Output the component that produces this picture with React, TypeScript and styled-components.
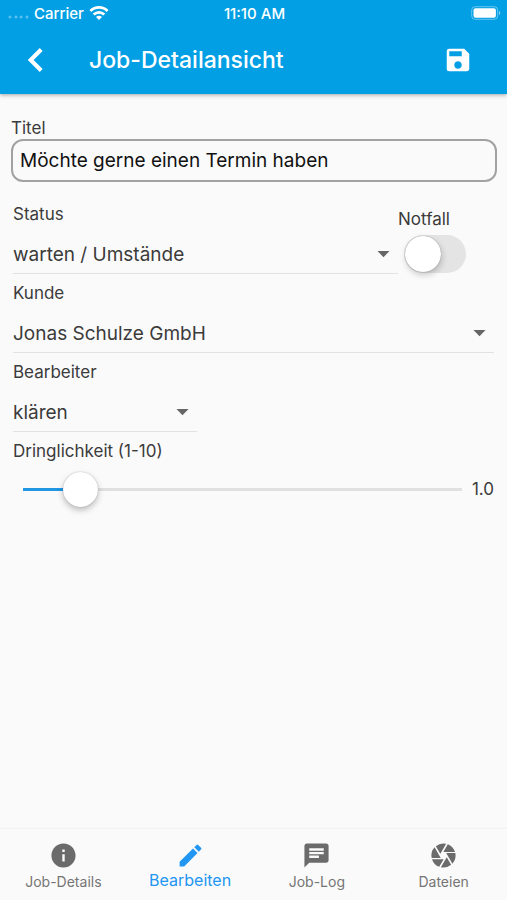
import { useState } from "react";
import type { CSSProperties, ReactNode } from "react";
import styled, { createGlobalStyle } from "styled-components";
import { MdArrowDropDown, MdCamera, MdChat, MdEdit, MdInfo, MdSave } from "react-icons/md";

const GlobalStyle = createGlobalStyle`
  *, *::before, *::after { box-sizing: border-box; }
  body {
    margin: 0;
    background: #fafafa;
    color: #3b3b3b;
    font-family: Inter, "Liberation Sans", sans-serif;
  }
  button, input, select { font: inherit; color: inherit; margin: 0; }
`;

const Screen = styled.div`
  display: flex;
  flex-direction: column;
  min-height: 100vh;
`;

const Header = styled.header`
  background: #029fe4;
  color: #fff;
  box-shadow: 0 1px 4px rgba(0, 0, 0, 0.35);
`;

const StatusBar = styled.div`
  display: grid;
  grid-template-columns: 1fr auto 1fr;
  align-items: center;
  height: 26px;
  padding: 0 6px 0 8px;
  font-size: 15px;
  font-weight: 500;
`;

const Carrier = styled.div`
  display: flex;
  align-items: center;
  gap: 5px;
`;

const BatterySlot = styled.div`
  display: flex;
  justify-content: flex-end;
`;

const AppBar = styled.div`
  display: flex;
  align-items: center;
  height: 68px;
  padding: 0 29px 0 16px;
`;

const Title = styled.h1`
  flex: 1;
  margin: 0 0 0 33px;
  font-size: 23px;
  line-height: 32px;
  font-weight: 500;
`;

const IconButton = styled.button`
  display: grid;
  place-items: center;
  width: 40px;
  height: 40px;
  padding: 0;
  border: 0;
  background: none;
  cursor: pointer;
`;

const Form = styled.form`
  flex: 1;
  padding: 24px 10px 24px 11px;
`;

const TitleField = styled.div`
  display: flex;
  flex-direction: column;
  margin-bottom: 13px;
`;

const TitleInput = styled.input`
  width: 100%;
  height: 43px;
  padding: 0 7px;
  border: 2px solid #a2a2a2;
  border-radius: 12px;
  background: transparent;
  color: #111;
  font-size: 19px;
`;

const Label = styled.label<{ $height: number }>`
  display: block;
  font-size: 17px;
  line-height: ${(p) => p.$height}px;
`;

const Fields = styled.div`
  padding: 0 3px 0 2px;
`;

const StatusRow = styled.div`
  display: grid;
  grid-template-columns: 1fr 96px;
`;

const Field = styled.div<{ $width?: string }>`
  width: ${(p) => p.$width ?? "100%"};
`;

const SelectBox = styled.div`
  display: grid;
  align-items: center;
  border-bottom: 1px solid #e2e2e2;

  > * { grid-area: 1 / 1; }
  svg {
    justify-self: end;
    color: #666;
    pointer-events: none;
  }
`;

const Select = styled.select`
  appearance: none;
  width: 100%;
  height: 40px;
  padding: 2px 30px 0 0;
  border: 0;
  background: transparent;
  font-size: 19px;
`;

const SwitchField = styled.div`
  display: flex;
  flex-direction: column;
  align-items: flex-start;
  padding-top: 14px;
`;

const Switch = styled.input`
  appearance: none;
  display: flex;
  width: 62px;
  height: 38px;
  margin: 6px 0 0 6px;
  padding: 1px;
  border-radius: 19px;
  background: #e4e4e4;
  cursor: pointer;

  &::before {
    content: "";
    width: 36px;
    height: 36px;
    border-radius: 50%;
    background: #fff;
    box-shadow: 0 0 1px rgba(0, 0, 0, 0.45), 1px 3px 6px rgba(0, 0, 0, 0.2);
  }
  &:checked { justify-content: flex-end; background: #2196f3; }
`;

const SliderRow = styled.div`
  display: flex;
  align-items: center;
  gap: 10px;
  padding-left: 10px;
`;

const Slider = styled.input`
  appearance: none;
  flex: 1;
  min-width: 0;
  height: 36px;
  background: linear-gradient(to right, #2196e3 var(--fill), #e0e0e0 var(--fill)) center / 100% 3px no-repeat;
  cursor: pointer;

  &::-webkit-slider-thumb {
    appearance: none;
    width: 35px;
    height: 35px;
    border-radius: 50%;
    background: #fff;
    box-shadow: 0 0 1px rgba(0, 0, 0, 0.35), 0 3px 6px rgba(0, 0, 0, 0.25);
  }
`;

const SliderValue = styled.output`
  font-size: 17px;
`;

const TabBar = styled.nav`
  position: sticky;
  bottom: 0;
  display: grid;
  grid-template-columns: repeat(4, 1fr);
  height: 71px;
  background: #fafafa;
  box-shadow: 0 -1px 1px rgba(0, 0, 0, 0.03);
`;

const Tab = styled.button<{ $active: boolean }>`
  display: flex;
  flex-direction: column;
  align-items: center;
  gap: ${(p) => (p.$active ? 0 : 2)}px;
  padding: 12px 0 0;
  border: 0;
  background: none;
  color: ${(p) => (p.$active ? "#2196f3" : "#757575")};
  font-size: ${(p) => (p.$active ? 16 : 14)}px;
  line-height: 20px;
  cursor: pointer;

  svg { color: ${(p) => (p.$active ? "#2196f3" : "#6b6b6b")}; }
`;

function SignalDots() {
  return (
    <svg width="21" height="16" viewBox="0 0 21 16" fill="#fff" opacity="0.35" aria-hidden="true">
      {[2, 8, 13, 19].map((x) => (
        <circle key={x} cx={x} cy="12" r="1.5" />
      ))}
    </svg>
  );
}

function WifiIcon() {
  return (
    <svg width="20" height="16" viewBox="0 0 20 16" fill="none" stroke="#fff" strokeWidth="2.8" aria-hidden="true">
      <path d="M1.4 6C6.2 1.2 13.8 1.2 18.6 6" />
      <path d="M4.7 9.5c3-2.9 7.6-2.9 10.6 0" />
      <path d="M10 15 7 11.900c1.700-1.600 4.300-1.600 6 0z" fill="#fff" stroke="none" />
    </svg>
  );
}

function BatteryIcon() {
  return (
    <svg width="30" height="14" viewBox="0 0 30 14" aria-hidden="true">
      <rect x="0.7" y="0.7" width="26" height="12.6" rx="3.5" fill="none" stroke="#fff" strokeOpacity="0.4" />
      <rect x="2.5" y="2.3" width="22.4" height="9.4" rx="2" fill="#fff" />
      <path d="M28 5v4c1.8-.7 1.8-3.3 0-4z" fill="#fff" fillOpacity="0.5" />
    </svg>
  );
}

function BackIcon() {
  return (
    <svg width="16" height="24" viewBox="0 0 16 24" fill="none" stroke="#fff" strokeWidth="4" aria-hidden="true">
      <path d="M13.2 1.5 2.7 12l10.5 10.5" />
    </svg>
  );
}

type SelectFieldProps = { id: string; label: string; options: string[]; width?: string };

function SelectField({ id, label, options, width }: SelectFieldProps) {
  return (
    <Field $width={width}>
      <Label htmlFor={id} $height={38}>{label}</Label>
      <SelectBox>
        <Select id={id}>
          {options.map((o) => (
            <option key={o}>{o}</option>
          ))}
        </Select>
        <MdArrowDropDown size={29} />
      </SelectBox>
    </Field>
  );
}

const tabs: { label: string; icon: ReactNode }[] = [
  { label: "Job-Details", icon: <MdInfo size={29} /> },
  { label: "Bearbeiten", icon: <MdEdit size={29} /> },
  { label: "Job-Log", icon: <MdChat size={29} /> },
  { label: "Dateien", icon: <MdCamera size={29} /> },
];

export default function App() {
  const [title, setTitle] = useState("Möchte gerne einen Termin haben");
  const [urgency, setUrgency] = useState(1);
  const [active, setActive] = useState("Bearbeiten");

  return (
    <Screen>
      <GlobalStyle />
      <Header>
        <StatusBar>
          <Carrier>
            <SignalDots />
            <span>Carrier</span>
            <WifiIcon />
          </Carrier>
          <span>11:10 AM</span>
          <BatterySlot>
            <BatteryIcon />
          </BatterySlot>
        </StatusBar>
        <AppBar>
          <IconButton type="button" aria-label="Zurück">
            <BackIcon />
          </IconButton>
          <Title>Job-Detailansicht</Title>
          <IconButton type="submit" form="job" aria-label="Speichern">
            <MdSave size={30} color="#fff" />
          </IconButton>
        </AppBar>
      </Header>

      <Form id="job" onSubmit={(e) => e.preventDefault()}>
        <TitleField>
          <Label htmlFor="title" $height={21}>Titel</Label>
          <TitleInput id="title" type="text" value={title} onChange={(e) => setTitle(e.target.value)} />
        </TitleField>
        <Fields>
          <StatusRow>
            <SelectField id="status" label="Status" options={["warten / Umstände"]} />
            <SwitchField>
              <Label htmlFor="emergency" $height={20}>Notfall</Label>
              <Switch id="emergency" type="checkbox" role="switch" />
            </SwitchField>
          </StatusRow>
          <SelectField id="customer" label="Kunde" options={["Jonas Schulze GmbH"]} />
          <SelectField id="assignee" label="Bearbeiter" options={["klären"]} width="184px" />
          <Label htmlFor="urgency" $height={39}>Dringlichkeit (1-10)</Label>
          <SliderRow>
            <Slider
              id="urgency"
              type="range"
              min={0}
              max={10}
              value={urgency}
              onChange={(e) => setUrgency(Number(e.target.value))}
              style={{ "--fill": `${4 + urgency * 9.2}%` } as CSSProperties}
            />
            <SliderValue htmlFor="urgency">{urgency.toFixed(1)}</SliderValue>
          </SliderRow>
        </Fields>
      </Form>

      <TabBar>
        {tabs.map((t) => (
          <Tab key={t.label} type="button" $active={t.label === active} onClick={() => setActive(t.label)}>
            {t.icon}
            {t.label}
          </Tab>
        ))}
      </TabBar>
    </Screen>
  );
}
